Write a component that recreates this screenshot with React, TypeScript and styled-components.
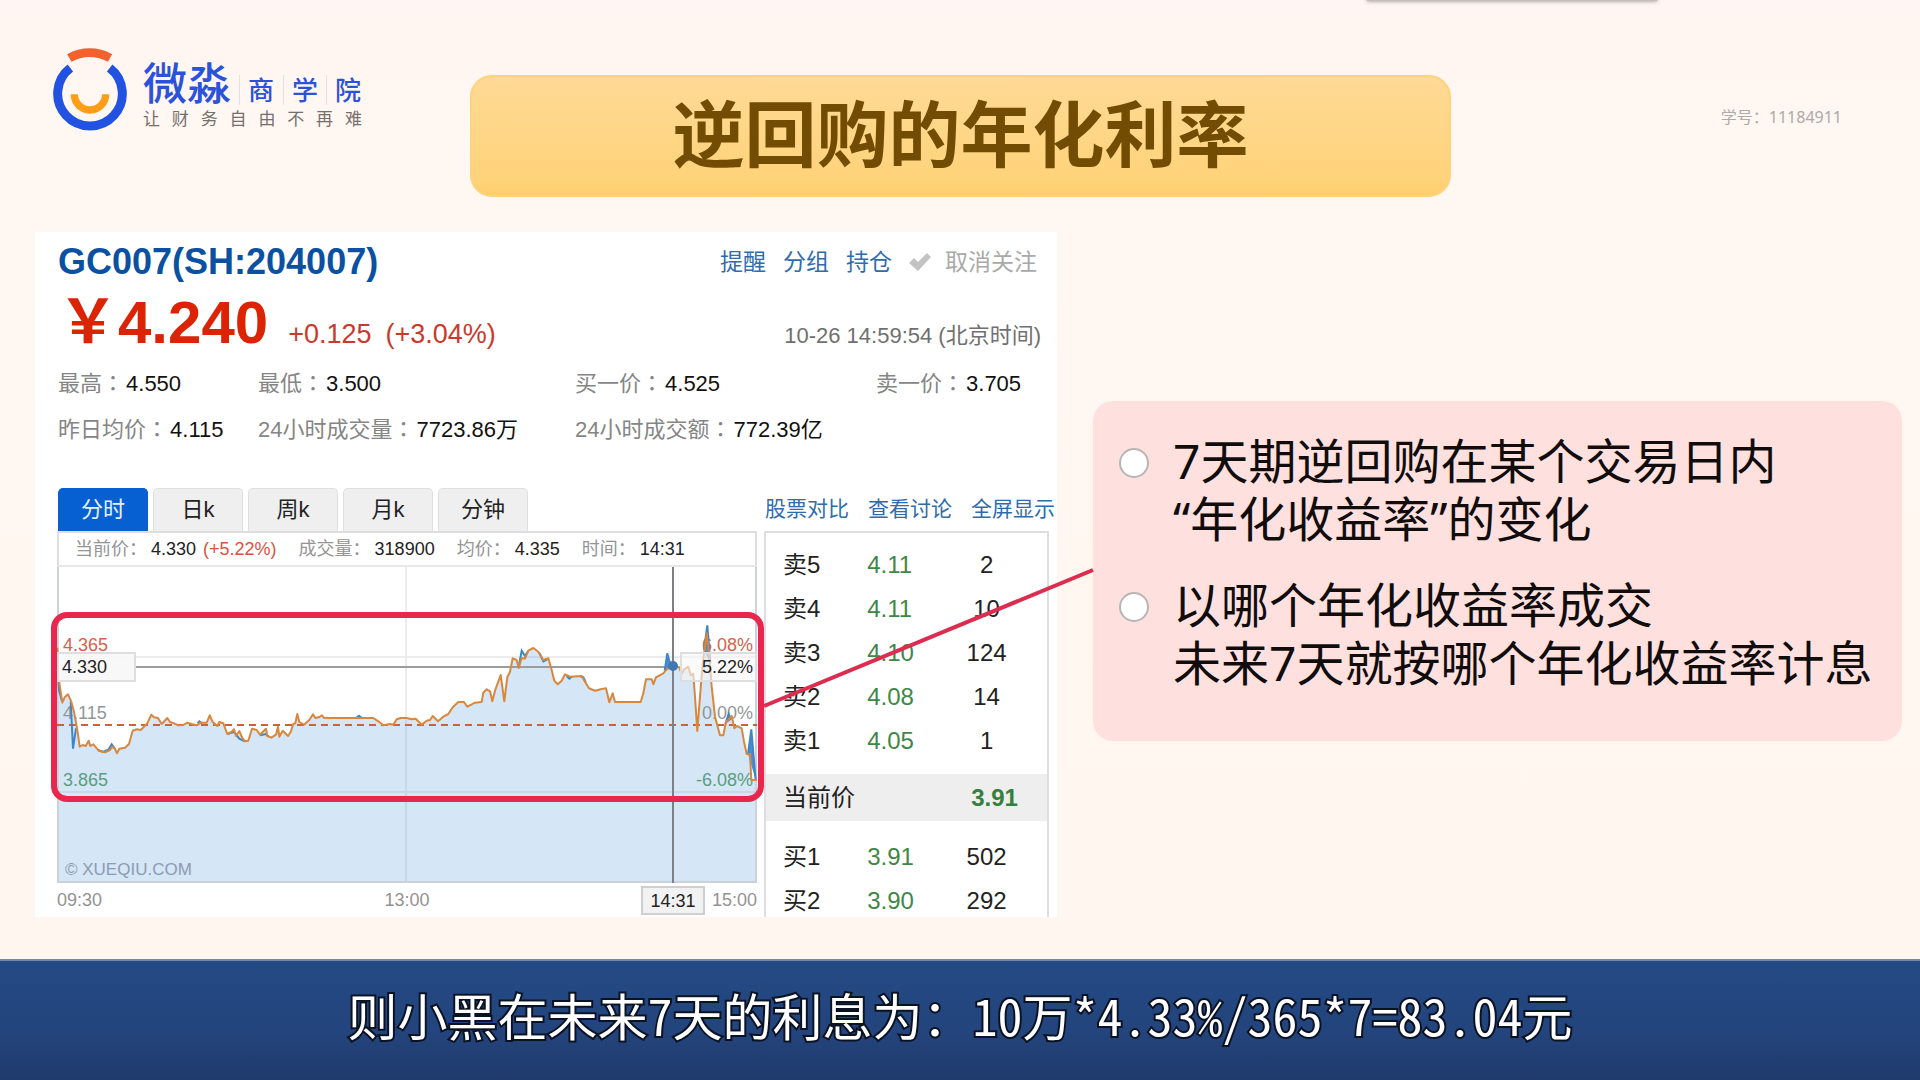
import React from 'react';
import styled, { createGlobalStyle } from 'styled-components';

const latin = '"Liberation Sans", "Noto Sans CJK SC", sans-serif';
const hans = '"Noto Sans", "Noto Sans CJK SC", sans-serif';

const Global = createGlobalStyle`
  * { box-sizing: border-box; }
  body { margin: 0; background: #fff6f0; font-family: ${latin}; color: #222; }
  h1, h2, p, ul, dl, dd { margin: 0; padding: 0; }
  a { text-decoration: none; color: #2f6cab; }
`;

const Stage = styled.div`
  position: relative;
  min-height: 100vh;
  display: flex;
  flex-direction: column;
  overflow: hidden;
  background: linear-gradient(#fff5f2, #fff7f1 120px, #fff6ef);
`;

const TopShade = styled.div`
  position: absolute;
  top: -10px;
  left: 71.2%;
  width: 15.1%;
  height: 11px;
  background: #c4bebb;
  box-shadow: 0 0 4px #8d8885;
`;

const Header = styled.header`
  display: grid;
  grid-template-columns: 470fr 981fr 469fr;
  align-items: start;
  padding: 48px 0 35px;
`;

const Brand = styled.a`
  display: flex;
  gap: 16px;
  padding-left: 53px;
`;

const Wordmark = styled.div`
  display: flex;
  flex-direction: column;
  gap: 4px;
  padding-top: 13px;
  font-family: ${hans};
`;

const Name = styled.div`
  display: flex;
  align-items: flex-end;
  color: #2c52d9;
  font-weight: 500;
  font-size: 44px;
  line-height: 44px;
`;

const NamePart = styled.span<{ $first?: boolean }>`
  width: ${p => (p.$first ? 44 : 43)}px;
  margin-left: ${p => (p.$first ? 8 : 0)}px;
  padding-left: 8px;
  border-left: 1px solid #e9dde6;
  font-size: 26px;
  line-height: 30px;
`;

const Tagline = styled.div`
  display: flex;
  justify-content: space-between;
  width: 219px;
  color: #75706e;
  font-size: 17px;
  line-height: 20px;
`;

const Banner = styled.h1`
  margin-top: 27px;
  height: 122px;
  border: 2px solid #ffd27c;
  border-radius: 22px;
  background: linear-gradient(#ffda96, #ffd37b 85%, #ffcf6c);
  color: #714c02;
  font: 700 72px/112px ${hans};
  text-align: center;
`;

const StudentId = styled.p`
  margin-top: 57px;
  padding-right: 78px;
  color: #aeaaa8;
  font: 16px/24px ${hans};
  text-align: right;
`;

const Main = styled.main`
  display: grid;
  grid-template-columns: 1022fr 809fr;
  column-gap: 36px;
  padding: 0 18px 42px 35px;
`;

const Quote = styled.section`
  background: #fff;
  padding: 12px 8px 0 22px;
`;

const QuoteRow = styled.div<{ $align: string; $gap: number }>`
  display: flex;
  justify-content: space-between;
  align-items: ${p => p.$align};
  padding: 0 8px 0 1px;
  margin-bottom: ${p => p.$gap}px;
`;

const Ticker = styled.h2`
  color: #0a51a1;
  font-size: 36px;
  line-height: 36px;
`;

const Actions = styled.nav`
  display: flex;
  align-items: center;
  gap: 17px;
  padding-right: 4px;
  font-size: 23px;
  line-height: 36px;
`;

const Unfollow = styled.button`
  display: flex;
  align-items: center;
  gap: 14px;
  border: 0;
  padding: 0;
  background: none;
  color: #a9a9a9;
  font: inherit;
`;

const Price = styled.div`
  display: flex;
  align-items: baseline;
  color: #c93a2c;
  font-size: 27px;
  line-height: 1;
`;

const Last = styled.strong`
  color: #dc2304;
  font-size: 60px;
  margin-right: 20px;
`;

const Change = styled.span`
  margin-right: 14px;
`;

const Time = styled.time`
  color: #707070;
  font-size: 22px;
`;

const Stats = styled.dl`
  display: grid;
  grid-template-columns: 200fr 317fr 301fr 173fr;
  grid-auto-rows: 46px;
  padding-left: 1px;
  font-size: 22px;
  line-height: 46px;
`;

const Stat = styled.div`
  display: flex;
  align-items: baseline;
  gap: 2px;
  white-space: nowrap;
  dt { color: #858585; }
  dd { color: #111; }
`;

const Colon = styled.span`
  font-family: "Noto Sans CJK TC", sans-serif;
  line-height: 0;
`;

const Toolbar = styled.div`
  display: flex;
  justify-content: space-between;
  margin: 35px -6px 0 1px;
`;

const Tabs = styled.div`
  display: flex;
  gap: 5px;
`;

const Tab = styled.button<{ $active?: boolean }>`
  width: 90px;
  height: 43px;
  padding: 0;
  border: 1px solid ${p => (p.$active ? '#0660d2' : '#dfdfe1')};
  border-bottom: 0;
  border-radius: 5px 5px 0 0;
  background: ${p => (p.$active ? '#0660d2' : '#efeff0')};
  color: ${p => (p.$active ? '#e4f0ff' : '#222')};
  font: 22px/40px ${latin};
`;

const Links = styled.nav`
  display: flex;
  gap: 19px;
  font-size: 21px;
  line-height: 42px;
  white-space: nowrap;
`;

const Board = styled.div`
  display: grid;
  grid-template-columns: 700fr 285fr;
  column-gap: 7px;
`;

const Info = styled.dl`
  display: flex;
  gap: 22px;
  height: 36px;
  padding-left: 16px;
  border: 2px solid #dedee0;
  border-bottom-color: #e8e6e8;
  font-size: 18px;
  line-height: 32px;
  white-space: nowrap;
  div { display: flex; gap: 4px; }
  dt { color: #949494; }
  dd { color: #222; }
`;

const Rise = styled.span`
  margin-left: 7px;
  color: #d9533f;
`;

const ChartSvg = styled.svg`
  position: relative;
  z-index: 1;
  display: block;
  width: 100%;
  overflow: visible;
  font-family: ${latin};
  font-size: 18px;
`;

const Axis = styled.div`
  position: relative;
  display: flex;
  justify-content: space-between;
  height: 34px;
  color: #939393;
  font-size: 18px;
  line-height: 34px;
`;

const AxisMark = styled.span`
  position: absolute;
  top: 3px;
  left: 88%;
  width: 64px;
  height: 29px;
  transform: translateX(-50%);
  border: 2px solid #cfcfcf;
  background: #f3f2f3;
  color: #222;
  line-height: 26px;
  text-align: center;
`;

const Book = styled.div`
  height: 386px;
  overflow: hidden;
  border: 2px solid #dedee0;
  border-bottom: 0;
`;

const BookTable = styled.table`
  width: 100%;
  border-collapse: collapse;
  table-layout: fixed;
  color: #222;
  font-size: 24px;
  th { font-weight: 400; text-align: left; padding: 0 0 0 17px; }
  td { padding: 0; text-align: center; }
`;

const Level = styled.tr`
  height: 44px;
  line-height: 44px;
  td:nth-child(2) { color: #3f8746; text-align: left; }
`;

const Current = styled.tr`
  height: 47px;
  line-height: 46px;
  background: #efeeef;
  td { color: #35803c; font-weight: 700; padding-left: 16px; }
`;

const Spacer = styled.tbody<{ $h: number }>`
  td { height: ${p => p.$h}px; }
`;

const Notes = styled.ul`
  align-self: center;
  display: flex;
  flex-direction: column;
  gap: 28px;
  height: 340px;
  margin-bottom: 8px;
  padding: 31px 0 0 26px;
  border-radius: 20px;
  background: #fee1df;
  list-style: none;
`;

const Note = styled.li`
  display: flex;
  gap: 24px;
  color: #120d0d;
  font: 48px/58px ${hans};
  white-space: nowrap;
  &::before {
    content: "";
    flex: none;
    width: 26px;
    height: 26px;
    margin-top: 16px;
    border: 2px solid #b9b5b5;
    border-radius: 50%;
    background: #fff;
  }
`;

const Caption = styled.footer`
  flex: 1;
  min-height: 121px;
  border-top: 2px solid #7586ab;
  background: linear-gradient(#244a85, #23447c 60%, #203a6c);
  color: #fff;
  font: 50px/106px "Noto Sans Mono CJK SC", "Noto Sans CJK SC", sans-serif;
  text-align: center;
  -webkit-text-stroke: 4px #0b1222;
  paint-order: stroke fill;
`;

type Pt = [number, number];

const average: Pt[] = [
  [82,143],[86,235],[97,308],[104,292],[114,283],[124,305],[132,335],[142,390],[149,440],[158,435],[167,438],[176,422],[181,438],[190,433],[206,452],[225,457],[240,450],[247,440],[255,446],[261,460],[268,446],[285,443],[297,432],[308,392],[320,388],[332,390],[345,377],[352,370],[364,344],[372,352],[384,354],[395,372],[412,354],[420,366],[432,370],[445,376],[460,375],[472,368],[485,372],[500,376],[512,368],[530,368],[539,346],[548,366],[562,378],[568,366],[580,370],[592,402],[604,396],[612,388],[618,408],[628,393],[636,412],[645,424],[655,422],[666,386],[680,390],[690,404],[708,386],[712,408],[724,413],[738,404],[744,380],[748,410],[758,392],[774,408],[782,396],[790,372],[796,370],[802,342],[808,366],[822,374],[838,360],[849,343],[856,354],[866,352],[876,346],[882,354],[1030,354],[1045,364],[1060,376],[1080,372],[1090,374],[1100,358],[1112,354],[1130,354],[1145,358],[1157,356],[1175,374],[1190,362],[1200,360],[1208,348],[1224,364],[1240,350],[1255,342],[1268,322],[1285,306],[1302,306],[1312,320],[1335,308],[1355,306],[1360,278],[1370,268],[1380,274],[1387,304],[1395,272],[1412,225],[1423,304],[1432,232],[1440,215],[1448,175],[1460,180],[1466,204],[1475,174],[1485,176],[1495,152],[1510,144],[1525,155],[1540,180],[1555,175],[1565,210],[1573,242],[1583,253],[1595,242],[1605,223],[1620,230],[1655,228],[1665,245],[1677,265],[1695,272],[1715,267],[1728,265],[1738,307],[1748,280],[1755,306],[1832,306],[1840,280],[1848,238],[1865,238],[1870,253],[1878,232],[1900,220],[1910,208],[1928,198],[1948,202],[1955,222],[1962,208],[1975,200],[1982,225],[1990,222],[1995,290],[2002,393],[2010,290],[2018,190],[2030,100],[2038,170],[2045,260],[2055,350],[2070,406],[2080,406],[2088,365],[2095,360],[2105,348],[2113,385],[2122,378],[2135,385],[2142,425],[2150,462],[2160,462],[2164,540],[2180,540],
];

const spikes: Pt[][] = [
  [[83,200],[87,270],[96,304]],
  [[122,305],[129,446],[138,385]],
  [[204,450],[220,456],[236,448],[245,433],[256,448]],
  [[592,402],[612,396],[628,416],[645,424]],
  [[690,406],[708,402],[716,410]],
  [[503,370],[508,364],[516,370]],
  [[978,354],[987,347],[996,354]],
  [[1466,200],[1475,152],[1485,168],[1495,152]],
  [[1528,158],[1540,184],[1552,178]],
  [[1610,228],[1618,236],[1626,230]],
  [[1650,228],[1660,232],[1667,246]],
  [[1904,212],[1912,160],[1920,190],[1928,196]],
  [[2022,150],[2032,76],[2041,190]],
  [[2086,372],[2096,342],[2102,360]],
  [[2154,462],[2164,388],[2177,540]],
];

const plot = (pts: Pt[]) =>
  pts.map(([x, y]) => `${(x / 3 - 27).toFixed(1)},${(y / 3 + 33).toFixed(1)}`).join(' ');

const Chart = () => (
  <ChartSvg viewBox="0 0 700 316" role="img" aria-label="分时">
    <polygon points={`0,316 ${plot(average)} 700,316`} fill="#d5e6f7" />
    <path d="M349 0V316M0 90H700M0 225H700" stroke="#8a8a9a" strokeOpacity="0.16" strokeWidth="2" fill="none" />
    <path d="M1 0V315H699V0" stroke="#cdd2d8" strokeWidth="2" fill="none" />
    <text x="8" y="308" fontSize="17" fill="#8d9bb0">© XUEQIU.COM</text>
    <text x="6" y="84" fill="#d9604c">4.365</text>
    <text x="6" y="152" fill="#929699">4.115</text>
    <text x="6" y="219" fill="#5a9e7d">3.865</text>
    <g textAnchor="end">
      <text x="696" y="84" fill="#d9604c">6.08%</text>
      <text x="696" y="152" fill="#929699">0.00%</text>
      <text x="696" y="219" fill="#5a9e7d">-6.08%</text>
    </g>
    <path d="M0 158H700" stroke="#d0603a" strokeWidth="2" strokeDasharray="7 5" />
    <path d="M78 100H616" stroke="#9c9c9c" strokeWidth="2" />
    <path d="M616 0V316" stroke="#7d8186" strokeWidth="2" />
    {spikes.map((s, i) => (
      <polyline key={i} points={plot(s)} fill={i > 10 ? '#4a8fcf' : 'none'} stroke="#3f86c8" strokeWidth="2" />
    ))}
    <polyline points={plot(average)} fill="none" stroke="#d9873c" strokeWidth="2" strokeLinejoin="round" />
    <circle cx="616" cy="99" r="5" fill="#3f78b4" />
    <rect x="1" y="86" width="77" height="28" fill="#f7f7f8" fillOpacity="0.92" stroke="#dedee0" strokeWidth="2" />
    <rect x="624" y="86" width="75" height="28" fill="#f7f7f8" fillOpacity="0.6" stroke="#dedee0" strokeWidth="2" />
    <text x="5" y="106" fill="#222">4.330</text>
    <text x="696" y="106" fill="#222" textAnchor="end">5.22%</text>
    <rect x="-3" y="48" width="707" height="184" rx="13" fill="none" stroke="#e8274f" strokeWidth="6" />
    <path d="M707 139L1036 3" stroke="#dc2c50" strokeWidth="4" />
  </ChartSvg>
);

const Label = ({ text }: { text: string }) => <dt>{text}<Colon>：</Colon></dt>;

const stats = [
  ['最高', '4.550'], ['最低', '3.500'], ['买一价', '4.525'], ['卖一价', '3.705'],
  ['昨日均价', '4.115'], ['24小时成交量', '7723.86万'], ['24小时成交额', '772.39亿'],
];
const sells = [['卖5', '4.11', '2'], ['卖4', '4.11', '10'], ['卖3', '4.10', '124'], ['卖2', '4.08', '14'], ['卖1', '4.05', '1']];
const buys = [['买1', '3.91', '502'], ['买2', '3.90', '292']];

const Levels = ({ rows }: { rows: string[][] }) => (
  <tbody>
    {rows.map(([name, price, volume]) => (
      <Level key={name}><th scope="row">{name}</th><td>{price}</td><td>{volume}</td></Level>
    ))}
  </tbody>
);

export default function App() {
  return (
    <>
      <Global />
      <Stage>
        <TopShade />
        <Header>
          <Brand href="#">
            <svg width="74" height="83" viewBox="0 0 222 249" fill="none" aria-hidden="true">
              <path d="M52 60A97 97 0 1 0 170 60" stroke="#2152e2" strokeWidth="27" />
              <path d="M49 30A124 124 0 0 1 171 30" stroke="#f3622d" strokeWidth="26" />
              <path d="M64 139A47 47 0 0 0 158 139" stroke="#ff9d17" strokeWidth="22" />
            </svg>
            <Wordmark>
              <Name>微淼<NamePart $first>商</NamePart><NamePart>学</NamePart><NamePart>院</NamePart></Name>
              <Tagline>{[...'让财务自由不再难'].map(c => <span key={c}>{c}</span>)}</Tagline>
            </Wordmark>
          </Brand>
          <Banner>逆回购的年化利率</Banner>
          <StudentId>学号：11184911</StudentId>
        </Header>
        <Main>
          <Quote>
            <QuoteRow $align="center" $gap={13}>
              <Ticker>GC007(SH:204007)</Ticker>
              <Actions>
                <a href="#">提醒</a><a href="#">分组</a><a href="#">持仓</a>
                <Unfollow type="button">
                  <svg width="22" height="22" viewBox="0 0 22 22" aria-hidden="true">
                    <path d="M0 12L5 7L9 11L18 2L22 6L9 20Z" fill="#c3c3c3" />
                  </svg>
                  取消关注
                </Unfollow>
              </Actions>
            </QuoteRow>
            <QuoteRow $align="baseline" $gap={8}>
              <Price><Last>￥4.240</Last><Change>+0.125</Change><span>(+3.04%)</span></Price>
              <Time>10-26 14:59:54 (北京时间)</Time>
            </QuoteRow>
            <Stats>
              {stats.map(([k, v]) => <Stat key={k}><Label text={k} /><dd>{v}</dd></Stat>)}
            </Stats>
            <Toolbar>
              <Tabs>
                <Tab type="button" $active>分时</Tab>
                {['日k', '周k', '月k', '分钟'].map(t => <Tab type="button" key={t}>{t}</Tab>)}
              </Tabs>
              <Links><a href="#">股票对比</a><a href="#">查看讨论</a><a href="#">全屏显示</a></Links>
            </Toolbar>
            <Board>
              <div>
                <Info>
                  <div><dt>当前价：</dt><dd>4.330<Rise>(+5.22%)</Rise></dd></div>
                  <div><dt>成交量：</dt><dd>318900</dd></div>
                  <div><dt>均价：</dt><dd>4.335</dd></div>
                  <div><dt>时间：</dt><dd>14:31</dd></div>
                </Info>
                <Chart />
                <Axis>
                  <span>09:30</span><span>13:00</span><span>15:00</span>
                  <AxisMark>14:31</AxisMark>
                </Axis>
              </div>
              <Book>
                <BookTable>
                  <colgroup><col width="36%" /><col width="21%" /><col width="43%" /></colgroup>
                  <Spacer $h={10}><tr><td colSpan={3} /></tr></Spacer>
                  <Levels rows={sells} />
                  <Spacer $h={11}><tr><td colSpan={3} /></tr></Spacer>
                  <tbody><Current><th scope="row" colSpan={2}>当前价</th><td>3.91</td></Current></tbody>
                  <Spacer $h={14}><tr><td colSpan={3} /></tr></Spacer>
                  <Levels rows={buys} />
                </BookTable>
              </Book>
            </Board>
          </Quote>
          <Notes>
            <Note><p>7天期逆回购在某个交易日内<br />“年化收益率”的变化</p></Note>
            <Note><p>以哪个年化收益率成交<br />未来7天就按哪个年化收益率计息</p></Note>
          </Notes>
        </Main>
        <Caption>则小黑在未来7天的利息为：10万*4.33%/365*7=83.04元</Caption>
      </Stage>
    </>
  );
}
